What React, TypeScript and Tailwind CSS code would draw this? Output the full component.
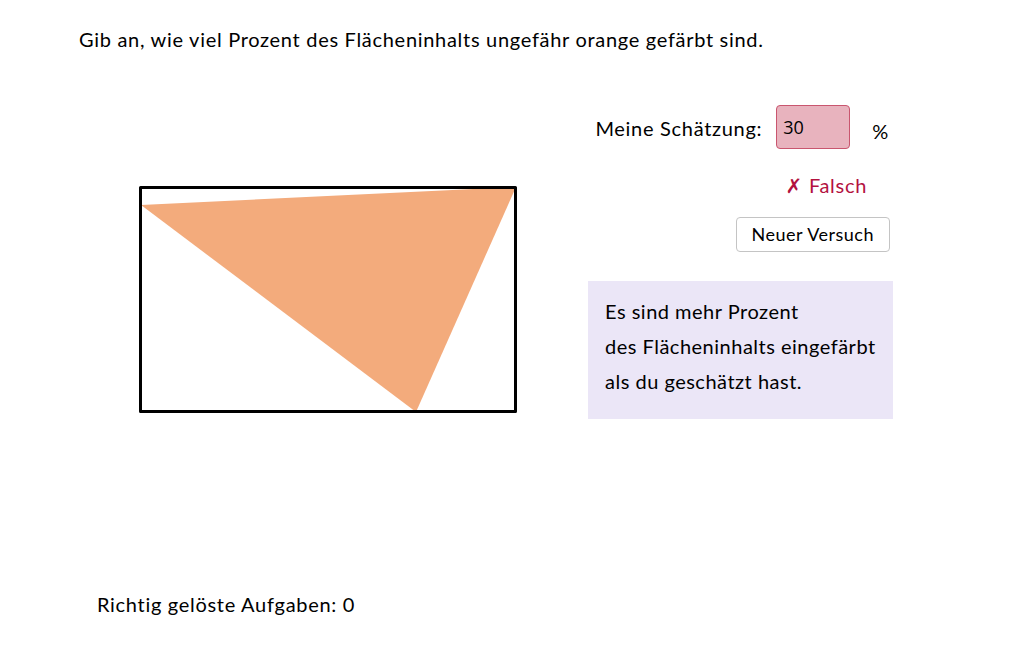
import React from "react";

export default function App() {
  const font = { fontFamily: '"Lato", "DejaVu Sans", sans-serif' };
  return (
    <div
      className="w-[1032px] h-[645px] bg-white text-black flex flex-col text-[20px] tracking-[0.7px]"
      style={font}
    >
      <div className="pt-[25px] pl-[79px] leading-[28px]">
        Gib an, wie viel Prozent des Flächeninhalts ungefähr orange gefärbt sind.
      </div>
      <div className="mt-[52px] flex">
        <div className="pl-[139px] pt-[81px]">
          <svg width="379" height="227" viewBox="0 0 379 227">
            <polygon points="2,19 377,1 277,226" fill="#f3ab7c" />
            <rect x="1.5" y="1.5" width="375" height="224" fill="none" stroke="#000" strokeWidth="3" strokeLinejoin="round" />
          </svg>
        </div>
        <div className="ml-[70px] w-[305px] flex flex-col items-end">
          <div className="flex items-center h-[44px] pr-[4px]">
            <span className="mt-[2px]">Meine Schätzung:</span>
            <div
              className="ml-[14px] w-[74px] h-[44px] rounded-[4px] border border-[#c9566f] bg-[#e8b3be] flex items-center pl-[6px] text-[18px] tracking-normal"
              style={{ fontFamily: '"Open Sans", sans-serif' }}
            >
              30
            </div>
            <span className="ml-[22px] mt-[8px]">%</span>
          </div>
          <div className="mt-[23px] pr-[26px] text-[#b3123f] leading-[26px]">
            <span className="font-bold mr-[6px]">✗</span>Falsch
          </div>
          <div className="mt-[19px] mr-[3px] h-[35px] px-[15px] border border-[#c4c4c4] rounded-[4px] flex items-center text-[18px] tracking-[0.5px]">
            Neuer Versuch
          </div>
          <div className="mt-[29px] w-[305px] h-[138px] bg-[#ebe6f7] pl-[17px] pt-[13px] leading-[35px] tracking-[0.5px]">
            Es sind mehr Prozent
            <br />
            des Flächeninhalts eingefärbt
            <br />
            als du geschätzt hast.
          </div>
        </div>
      </div>
      <div className="mt-auto mb-[26px] pl-[97px]">Richtig gelöste Aufgaben: 0</div>
    </div>
  );
}
